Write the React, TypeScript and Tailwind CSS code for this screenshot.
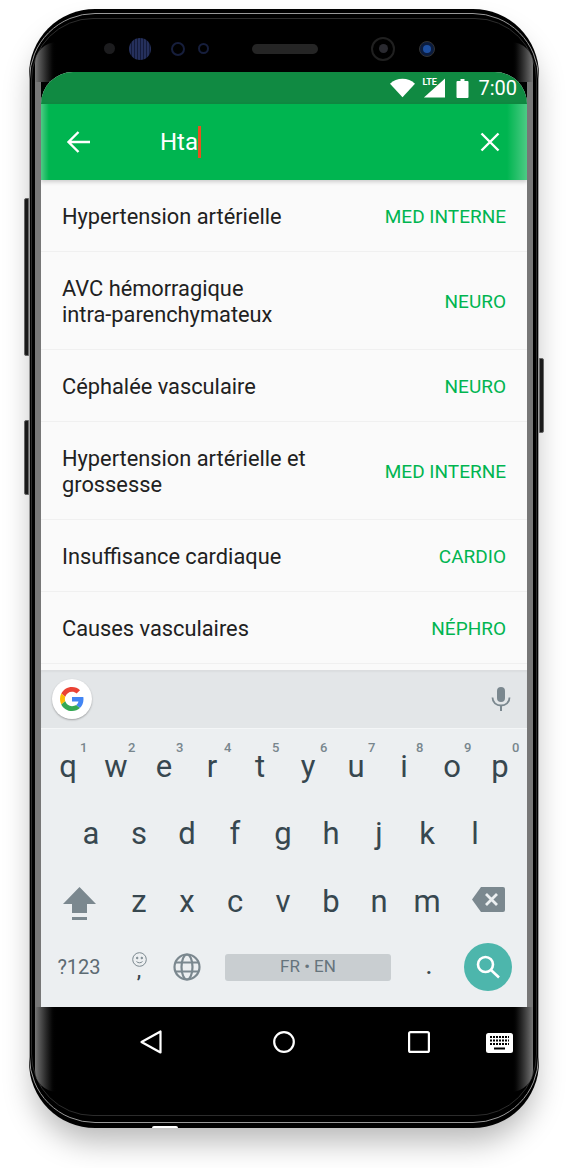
import React from "react";

const rows: { t: string[]; c: string; h: string }[] = [
  { t: ["Hypertension artérielle"], c: "MED INTERNE", h: "h-[72px]" },
  { t: ["AVC hémorragique", "intra-parenchymateux"], c: "NEURO", h: "h-[98px]" },
  { t: ["Céphalée vasculaire"], c: "NEURO", h: "h-[72px]" },
  { t: ["Hypertension artérielle et", "grossesse"], c: "MED INTERNE", h: "h-[98px]" },
  { t: ["Insuffisance cardiaque"], c: "CARDIO", h: "h-[72px]" },
  { t: ["Causes vasculaires"], c: "NÉPHRO", h: "h-[72px]" },
];

const Key = ({ k, n }: { k: string; n?: string }) => (
  <div className="relative flex w-[48px] justify-center text-[31px] leading-[36px] text-[#37474f]">
    {k}
    {n && <span className="absolute -top-[9px] left-[36px] text-[13px] leading-[16px] font-medium text-[#78868d]">{n}</span>}
  </div>
);

export default function App() {
  return (
    <div className="w-[568px] h-[1168px] overflow-hidden bg-white pl-[29px] pt-[9px] font-['Roboto',sans-serif]">
      <div className="relative w-[510px] h-[1119px] rounded-[66px] bg-black shadow-[0_18px_30px_-4px_rgba(0,0,0,0.28)]">
        {/* side buttons */}
        <div className="absolute -left-[5px] top-[189px] w-[5px] h-[158px] rounded-l-[2px] border border-[#666] bg-[#1a1a1a]" />
        <div className="absolute -left-[5px] top-[411px] w-[5px] h-[75px] rounded-l-[2px] border border-[#666] bg-[#1a1a1a]" />
        <div className="absolute -right-[5px] top-[349px] w-[5px] h-[75px] rounded-r-[2px] border border-[#666] bg-[#1a1a1a]" />
        {/* rim */}
        <div className="absolute inset-x-0 top-[4px] bottom-[5px] rounded-[66px] border border-[#999]" />
        <div className="absolute inset-x-[2px] top-[9px] bottom-[12px] rounded-[62px] border border-[#2c2c2c]" />
        <div className="absolute left-[123px] bottom-0 h-[2px] w-[26px] rounded-t-full bg-white" />
        {/* glass edges */}
        <div className="absolute left-[6px] top-[63px] h-[935px] w-[6px] bg-[#777]" />
        <div className="absolute right-[6px] top-[63px] h-[935px] w-[6px] bg-[#777]" />
        <div className="absolute left-[6px] top-[33px] h-[40px] w-[22px] rounded-tl-[30px] bg-gradient-to-r from-[#777] to-black" />
        <div className="absolute right-[6px] top-[33px] h-[40px] w-[22px] rounded-tr-[30px] bg-gradient-to-l from-[#777] to-black" />
        <div className="absolute left-[6px] top-[998px] h-[85px] w-[22px] rounded-bl-[40px] bg-gradient-to-r from-[#777] to-black" />
        <div className="absolute right-[6px] top-[998px] h-[85px] w-[22px] rounded-br-[40px] bg-gradient-to-l from-[#777] to-black" />

        <div className="relative flex h-full flex-col px-[12px]">
          {/* sensors */}
          <div className="flex h-[63px] shrink-0 items-center pl-[63px] pt-[16px]">
            <span className="h-[11px] w-[11px] rounded-full bg-[#1c1c1e]" />
            <span className="ml-[14px] h-[22px] w-[22px] rounded-full bg-[repeating-linear-gradient(90deg,#25305c_0,#25305c_2px,#141b3a_2px,#141b3a_3px)]" />
            <span className="ml-[20px] h-[14px] w-[14px] rounded-full border-2 border-[#161e3c] bg-black" />
            <span className="ml-[13px] flex h-[11px] w-[11px] items-center justify-center rounded-full border-2 border-[#161e3c] bg-black" />
            <span className="ml-[43px] h-[10px] w-[66px] rounded-full bg-[#252525]" />
            <span className="ml-[53px] flex h-[24px] w-[24px] items-center justify-center rounded-full border-2 border-[#202020] bg-black">
              <span className="h-[9px] w-[9px] rounded-full bg-[#2a2a30]" />
            </span>
            <span className="ml-[24px] flex h-[16px] w-[16px] items-center justify-center rounded-full border border-[#333] bg-[#0b1c3e]">
              <span className="h-[8px] w-[8px] rounded-full bg-[#1d4fa0]" />
            </span>
          </div>

          {/* screen */}
          <div className="relative flex h-[935px] shrink-0 flex-col overflow-hidden rounded-t-[32px] bg-[#fafafa]">
            <div className="flex h-[32px] shrink-0 items-center justify-end bg-[#108a42] pr-[10px] text-white">
              <svg width="25" height="20" viewBox="0 0 26 20"><path d="M0 5.500C3.500 2.300 8 .5 13 .5s9.500 1.800 13 5L13 19.500z" fill="#fff" /></svg>
              <div className="relative ml-[7px] h-[20px] w-[23px]">
                <svg className="absolute inset-0" width="23" height="20" viewBox="0 0 24 20"><path d="M24 0v20H2z" fill="#fff" /></svg>
                <span className="absolute left-0 -top-[1px] text-[9px] font-bold leading-[10px]">LTE</span>
              </div>
              <svg className="ml-[11px]" width="13" height="19" viewBox="0 0 12 19"><path d="M4 0h4v2h3a1 1 0 011 1v15a1 1 0 01-1 1H1a1 1 0 01-1-1V3a1 1 0 011-1h3z" fill="#fff" /></svg>
              <span className="ml-[9px] text-[20px] leading-[20px]">7:00</span>
            </div>

            <div className="z-10 flex h-[76px] shrink-0 items-center bg-[#00b550] pl-[25px] pr-[27px] text-white shadow-[0_2px_4px_rgba(0,0,0,0.18)]">
              <svg width="24" height="24" viewBox="0 0 24 24" fill="none" stroke="#fff" strokeWidth="2.400"><path d="M24 12H2M12.500 2 2.500 12l10 10" /></svg>
              <div className="ml-[70px] flex items-center text-[24px] leading-[32px]">
                Hta
                <span className="h-[32px] w-[2.500px] bg-[#e8501f]" />
              </div>
              <svg className="ml-auto" width="20" height="20" viewBox="0 0 20 20" fill="none" stroke="#fff" strokeWidth="2.400"><path d="M1.500 1.500l17 17M18.500 1.500l-17 17" /></svg>
            </div>

            {/* lit edges of the curved glass, over the bars */}
            <div className="absolute left-0 top-[32px] z-20 h-[76px] w-[8px] bg-gradient-to-r from-white/30 to-transparent" />
            <div className="absolute right-0 top-[32px] z-20 h-[76px] w-[20px] bg-gradient-to-l from-white/30 to-transparent" />

            <div className="flex-1 overflow-hidden">
              {rows.map((r) => (
                <div key={r.t[0]} className={"flex items-center justify-between border-b border-[#f0f0f0] pl-[21px] pr-[21px] pt-[3px] " + r.h}>
                  <div className="text-[21.8px] leading-[26px] text-[#212121]">
                    {r.t.map((l) => (
                      <div key={l}>{l}</div>
                    ))}
                  </div>
                  <div className="text-[19px] text-[#00b550]">{r.c}</div>
                </div>
              ))}
            </div>

            {/* keyboard */}
            <div className="flex h-[337px] shrink-0 flex-col bg-[#eceff1]">
              <div className="flex h-[59px] shrink-0 items-center justify-between border-b border-[#f4f6f7] bg-[#e3e6e8] pl-[11px] pr-[16px] shadow-[inset_0_2px_2px_rgba(0,0,0,0.04)]">
                <div className="flex h-[40px] w-[40px] items-center justify-center rounded-full bg-white shadow-[0_1px_2px_rgba(0,0,0,0.3)]">
                  <svg width="24" height="24" viewBox="0 0 48 48">
                    <path fill="#EA4335" d="M24 9.500c3.540 0 6.710 1.220 9.210 3.600l6.850-6.850C35.900 2.380 30.470 0 24 0 14.620 0 6.510 5.380 2.560 13.220l7.980 6.190C12.430 13.720 17.740 9.500 24 9.500z" />
                    <path fill="#4285F4" d="M46.980 24.550c0-1.570-.15-3.090-.38-4.550H24v9.020h12.940c-.58 2.960-2.260 5.480-4.780 7.180l7.730 6c4.510-4.180 7.090-10.360 7.090-17.650z" />
                    <path fill="#FBBC05" d="M10.530 28.590c-.48-1.450-.76-2.990-.76-4.590s.27-3.140.76-4.590l-7.980-6.190C.92 16.460 0 20.120 0 24c0 3.880.92 7.540 2.560 10.780l7.970-6.190z" />
                    <path fill="#34A853" d="M24 48c6.480 0 11.930-2.130 15.890-5.810l-7.730-6c-2.150 1.450-4.920 2.300-8.160 2.300-6.260 0-11.570-4.220-13.470-9.910l-7.980 6.190C6.510 42.620 14.620 48 24 48z" />
                  </svg>
                </div>
                <svg width="20" height="24" viewBox="0 0 20 24" fill="#7b888f">
                  <rect x="6" y="0" width="8" height="15" rx="4" />
                  <path d="M1.500 10.500c0 5 3.800 8 8.500 8s8.500-3 8.500-8" fill="none" stroke="#7b888f" strokeWidth="1.800" />
                  <rect x="9" y="18" width="2" height="6" />
                </svg>
              </div>

              <div className="flex flex-1 flex-col pt-[20px]">
                <div className="flex h-[36px] pl-[3px]">
                  {"qwertyuiop".split("").map((k, i) => (
                    <Key key={k} k={k} n={String((i + 1) % 10)} />
                  ))}
                </div>
                <div className="mt-[31px] flex h-[36px] pl-[26px]">
                  {"asdfghjkl".split("").map((k) => (
                    <Key key={k} k={k} />
                  ))}
                </div>
                <div className="mt-[32px] flex h-[36px] items-center pl-[3px]">
                  <div className="mt-[3px] flex w-[71px] justify-center">
                    <svg width="33" height="34" viewBox="0 0 33 34" fill="#7b888f">
                      <path d="M16.500 0 33 17H24v9H9v-9H0z" />
                      <rect x="9" y="30" width="15" height="3" />
                    </svg>
                  </div>
                  <div className="flex">
                    {"zxcvbnm".split("").map((k) => (
                      <Key key={k} k={k} />
                    ))}
                  </div>
                  <svg className="mb-[6px] ml-[21px]" width="33" height="25" viewBox="0 0 33 25">
                    <path d="M9 0h22a2 2 0 012 2v21a2 2 0 01-2 2H9L0 12.500z" fill="#7b888f" />
                    <path d="M14 7l11 11M25 7 14 18" stroke="#eceff1" strokeWidth="2.800" fill="none" />
                  </svg>
                </div>

                <div className="mt-[23px] flex h-[48px] items-center">
                  <div className="flex w-[76px] justify-center text-[20px] text-[#5d6b73]">?123</div>
                  <div className="mb-[6px] ml-[10px] flex w-[24px] flex-col items-center">
                    <svg width="15" height="15" viewBox="0 0 15 15" fill="none" stroke="#7b888f" strokeWidth="1"><circle cx="7.500" cy="7.500" r="6.800" /><circle cx="5.200" cy="6" r=".8" fill="#7b888f" /><circle cx="9.800" cy="6" r=".8" fill="#7b888f" /><path d="M4.500 9.500c1.500 1.700 4.500 1.700 6 0" /></svg>
                    <span className="mt-[-4px] h-[14px] text-[20px] leading-[14px] font-medium text-[#37474f]">,</span>
                  </div>
                  <svg className="ml-[22px]" width="28" height="28" viewBox="0 0 28 28" fill="none" stroke="#7b888f" strokeWidth="2.200">
                    <circle cx="14" cy="14" r="12.500" />
                    <ellipse cx="14" cy="14" rx="5.500" ry="12.500" />
                    <path d="M2.500 9.500h23M2.500 18.500h23" />
                  </svg>
                  <div className="ml-[24px] flex h-[27px] w-[166px] items-center justify-center rounded-[3px] bg-[#c9ced1] text-[17px] text-[#66747c]">FR • EN</div>
                  <span className="ml-[35px] w-[6px] text-[20px] font-bold text-[#37474f]">.</span>
                  <div className="ml-[32px] flex h-[48px] w-[48px] items-center justify-center rounded-full bg-[#4db6ac]">
                    <svg width="24" height="24" viewBox="0 0 24 24" fill="none" stroke="#fff" strokeWidth="2.600"><circle cx="9.500" cy="9.500" r="7.500" /><path d="m15 15 8 7.500" /></svg>
                  </div>
                </div>
              </div>
            </div>
          </div>

          {/* nav bar */}
          <div className="flex h-[70px] shrink-0 items-center pb-[1px] pl-[99px]">
            <svg width="22" height="24" viewBox="0 0 22 24" fill="none" stroke="#fff" strokeWidth="2.200" strokeLinejoin="round"><path d="M20.500 1.500v21L1.500 12z" /></svg>
            <svg className="ml-[111px]" width="22" height="22" viewBox="0 0 22 22" fill="none" stroke="#fff" strokeWidth="2.200"><circle cx="11" cy="11" r="9.800" /></svg>
            <svg className="ml-[113px]" width="22" height="22" viewBox="0 0 22 22" fill="none" stroke="#fff" strokeWidth="2.200"><rect x="1.100" y="1.100" width="19.800" height="19.800" rx="1.500" /></svg>
            <svg className="ml-[56px] mt-[3px]" width="27" height="20" viewBox="0 0 27 20">
              <rect width="27" height="20" rx="2.500" fill="#fff" />
              <path d="M4 4h19M4 7.500h19M4 11h19" stroke="#000" strokeWidth="2" strokeDasharray="2 1" fill="none" />
              <rect x="8" y="14.500" width="11" height="2" fill="#000" />
            </svg>
          </div>
        </div>
      </div>
    </div>
  );
}
